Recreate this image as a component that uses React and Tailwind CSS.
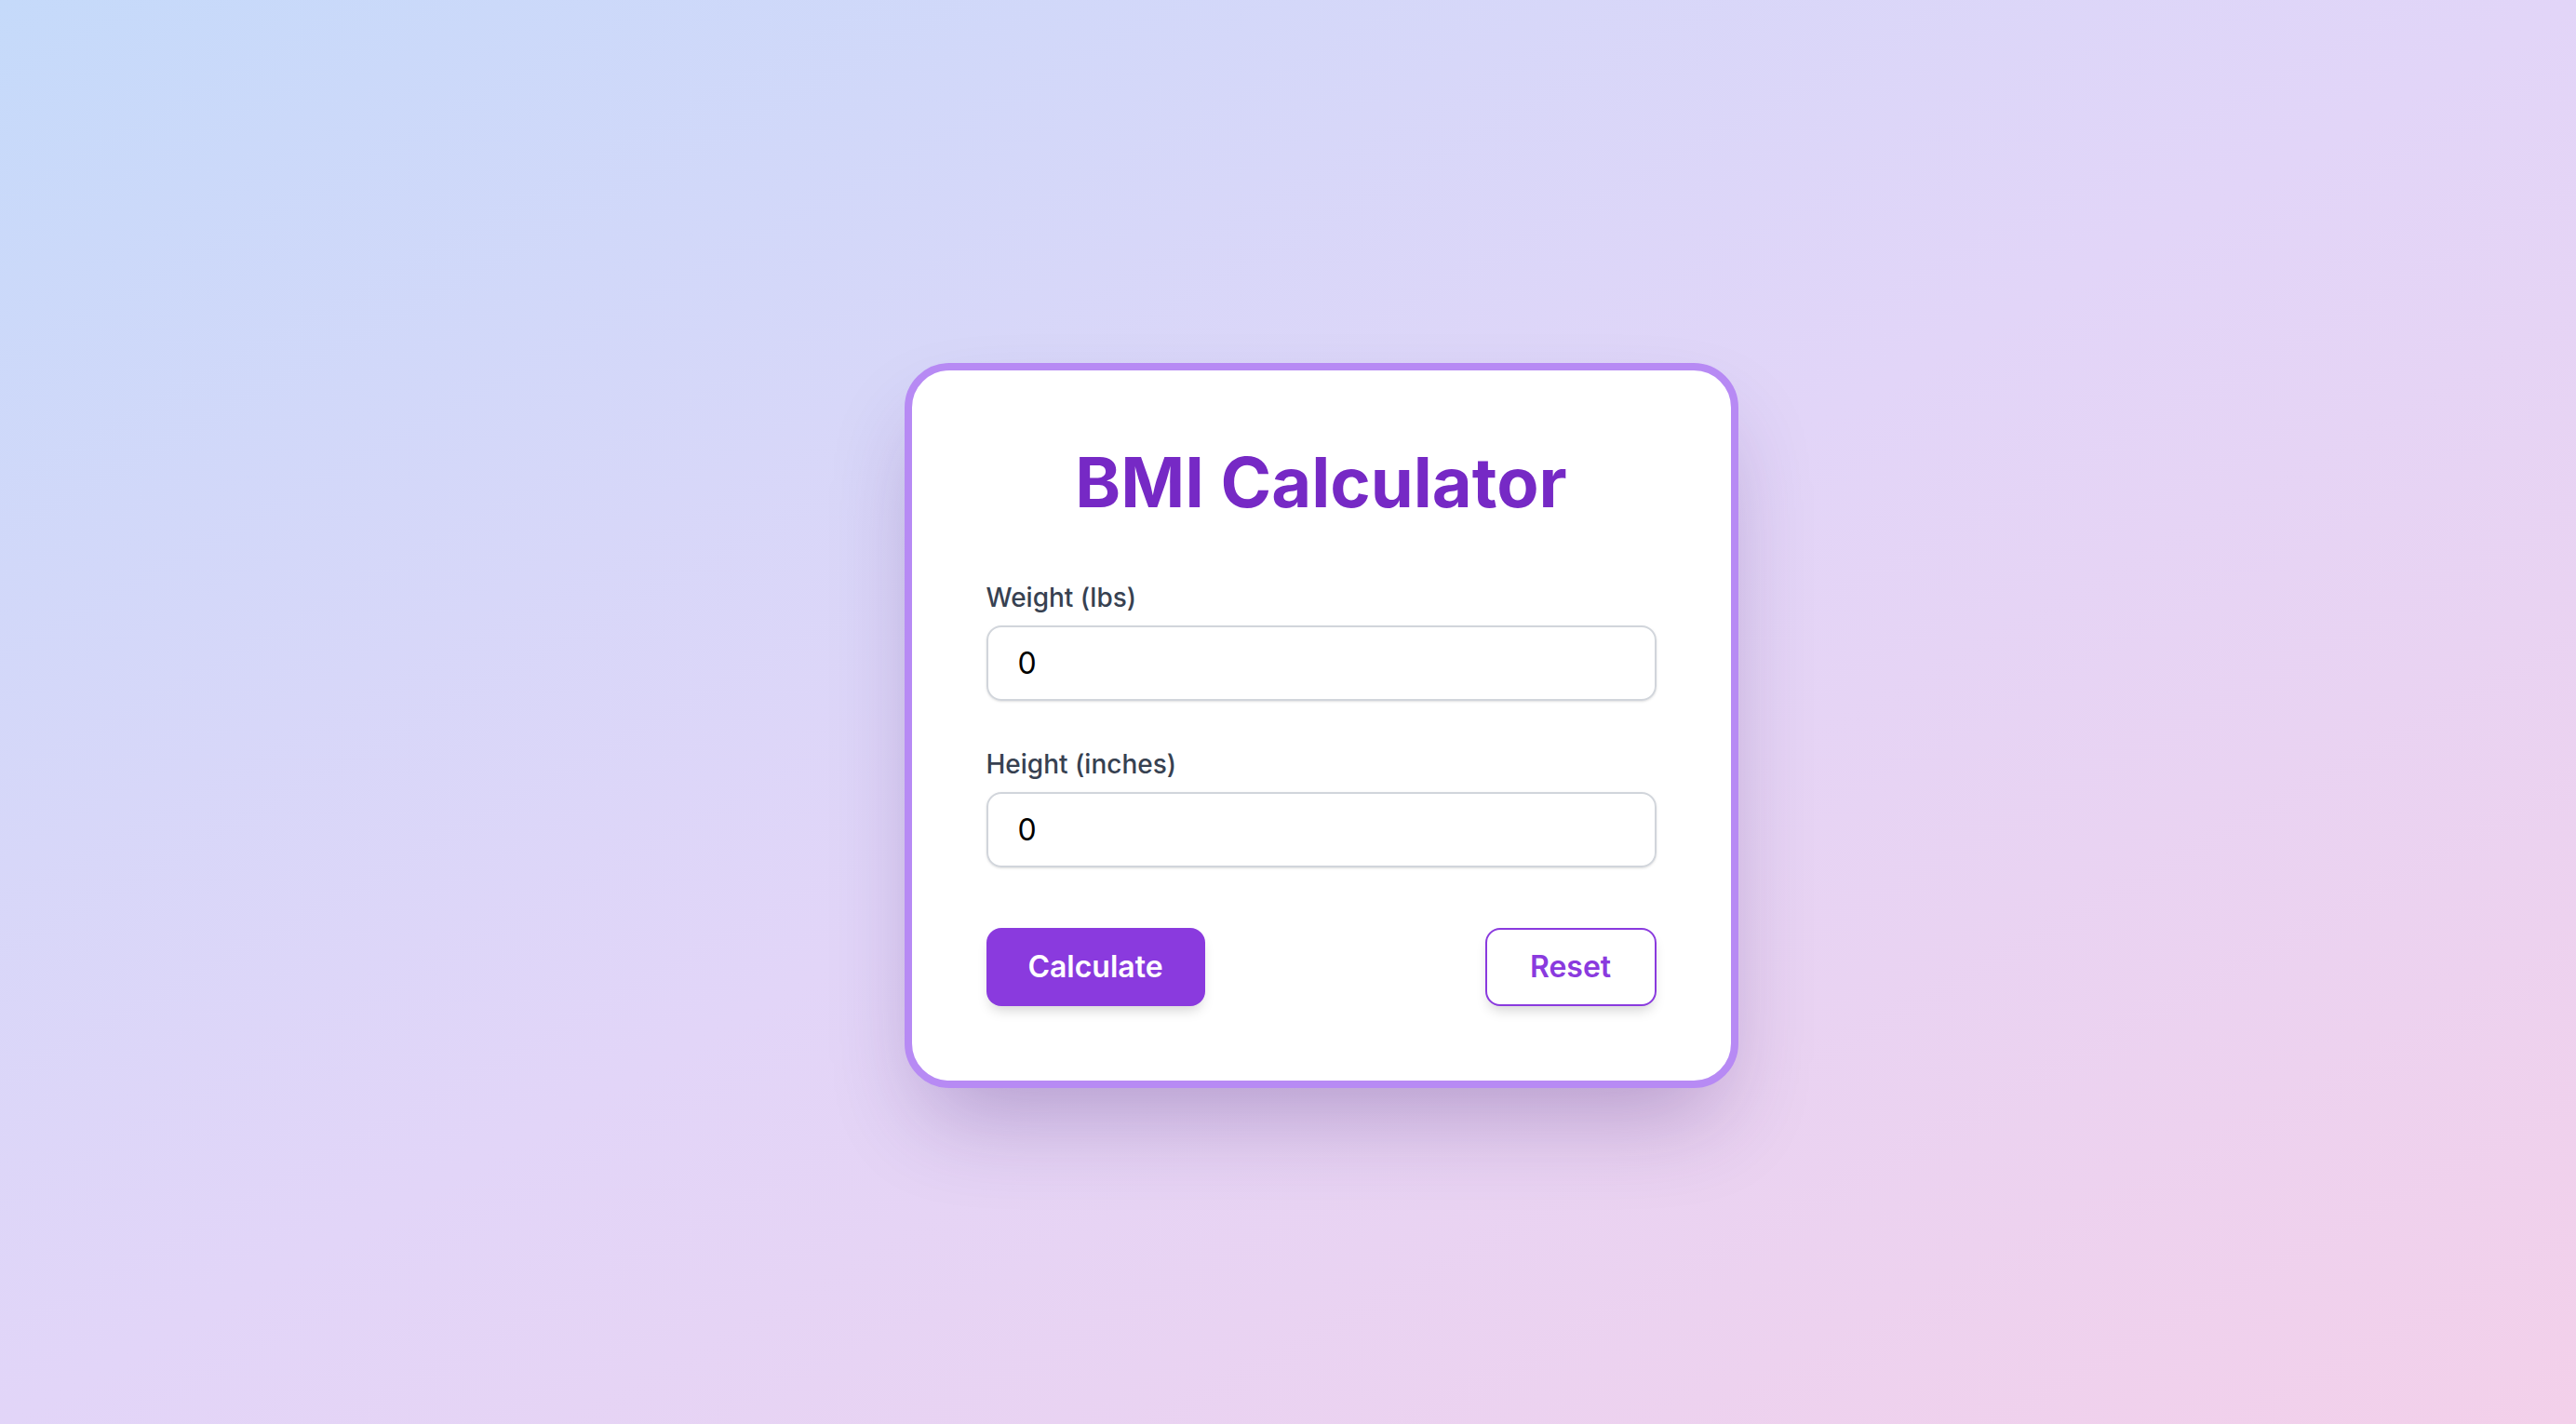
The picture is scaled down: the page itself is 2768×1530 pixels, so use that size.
import { useState } from 'react'

export default function App() {
  const [weight, setWeight] = useState('0')
  const [height, setHeight] = useState('0')

  function reset() {
    setWeight('0')
    setHeight('0')
  }

  return (
    <div
      className="min-h-screen w-full flex items-center justify-center pl-[71px] pt-[28px] bg-gradient-to-br from-[#c5dafa] via-[#e2d5f8] to-[#f3d0ea]"
      style={{ fontFamily: 'Inter, "Noto Sans", "Liberation Sans", sans-serif' }}
    >
      {/* ── CARD ── */}
      <div className="w-[896px] bg-white border-8 border-[#b78af4] rounded-[48px] p-[80px] shadow-[0_50px_100px_-24px_rgba(60,20,110,0.3)]">
        <h1 className="text-[74px] leading-[80px] font-bold text-[#7629c5] text-center mb-[64px]">
          BMI Calculator
        </h1>

        <label className="block text-[28px] leading-[40px] font-medium text-[#374151] mb-[10px]">
          Weight (lbs)
        </label>
        <input
          type="number"
          value={weight}
          onChange={e => setWeight(e.target.value)}
          className="block w-full h-[81px] px-[32px] text-[32px] text-black border-2 border-[#d1d5db] rounded-[16px] shadow-sm outline-none mb-[48px]"
        />

        <label className="block text-[28px] leading-[40px] font-medium text-[#374151] mb-[10px]">
          Height (inches)
        </label>
        <input
          type="number"
          value={height}
          onChange={e => setHeight(e.target.value)}
          className="block w-full h-[81px] px-[32px] text-[32px] text-black border-2 border-[#d1d5db] rounded-[16px] shadow-sm outline-none mb-[65px]"
        />

        {/* ── BUTTONS ── */}
        <div className="flex items-center justify-between">
          <button className="h-[84px] w-[235px] rounded-[16px] bg-[#8a3ade] text-white text-[32px] font-semibold shadow-[0_8px_14px_-4px_rgba(0,0,0,0.18)]">
            Calculate
          </button>
          <button
            onClick={reset}
            className="h-[84px] w-[184px] rounded-[16px] bg-white border-2 border-[#8a3ade] text-[#8a3ade] text-[32px] font-semibold shadow-[0_8px_14px_-4px_rgba(0,0,0,0.18)]"
          >
            Reset
          </button>
        </div>
      </div>
    </div>
  )
}
